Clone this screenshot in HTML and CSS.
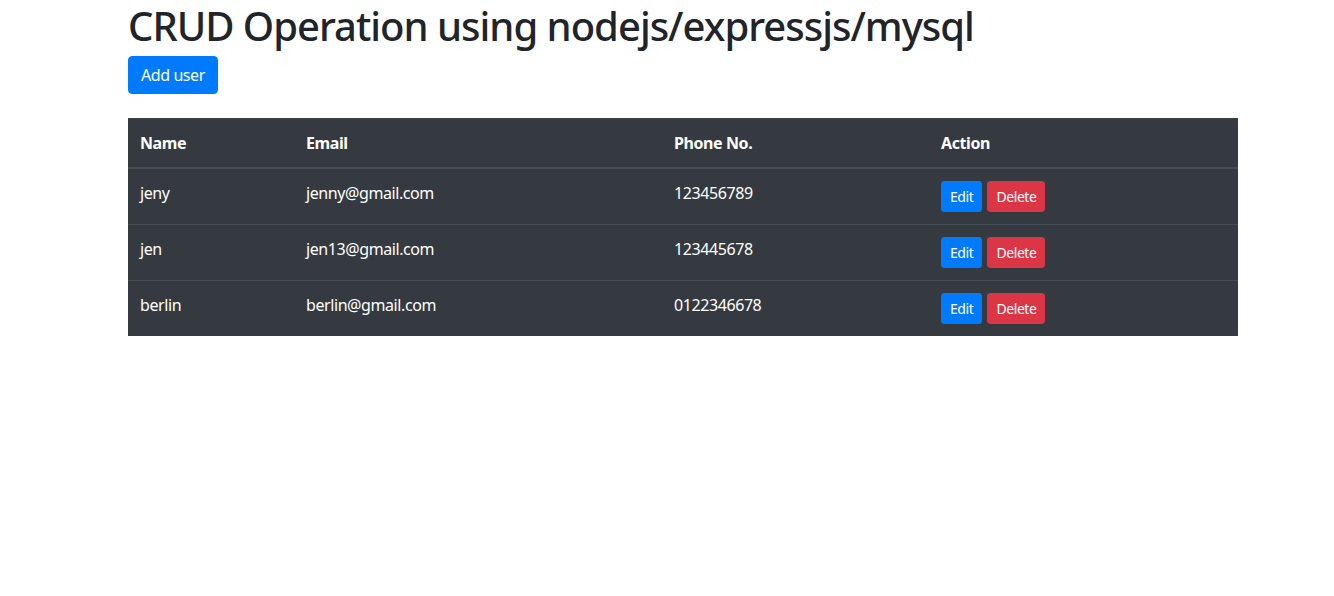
FILE: index.html
```html
<!DOCTYPE html>
<html lang="en">
<head>
<meta charset="utf-8">
<title>CRUD</title>
<link rel="stylesheet" href="styles.css">
</head>
<body>
<div class="container">
  <h1 class="title">CRUD Operation using nodejs/expressjs/mysql</h1>
  <button class="btn btn-primary">Add user</button>
  <table class="table">
    <thead>
      <tr>
        <th class="c-name">Name</th>
        <th class="c-email">Email</th>
        <th class="c-phone">Phone No.</th>
        <th class="c-action">Action</th>
      </tr>
    </thead>
    <tbody>
      <tr>
        <td>jeny</td>
        <td>jenny@gmail.com</td>
        <td>123456789</td>
        <td><div class="actions"><button class="btn btn-sm btn-primary">Edit</button><button class="btn btn-sm btn-danger">Delete</button></div></td>
      </tr>
      <tr>
        <td>jen</td>
        <td>jen13@gmail.com</td>
        <td>123445678</td>
        <td><div class="actions"><button class="btn btn-sm btn-primary">Edit</button><button class="btn btn-sm btn-danger">Delete</button></div></td>
      </tr>
      <tr>
        <td>berlin</td>
        <td>berlin@gmail.com</td>
        <td>0122346678</td>
        <td><div class="actions"><button class="btn btn-sm btn-primary">Edit</button><button class="btn btn-sm btn-danger">Delete</button></div></td>
      </tr>
    </tbody>
  </table>
</div>
</body>
</html>
```
FILE: styles.css
```css
html, body {
  margin: 0;
  padding: 0;
  background: #fff;
}
body {
  font-family: "Noto Sans", "Open Sans", sans-serif;
  font-size: 16px;
  line-height: 1.5;
  color: #212529;
  letter-spacing: -0.026em;
}
.container {
  width: 1110px;
  margin-left: 128px;
}
.title {
  margin: 0 0 6px 0;
  padding-top: 2px;
  font-size: 40px;
  font-weight: 500;
  line-height: 48px;
  letter-spacing: -1px;
}
.btn {
  display: inline-block;
  font-family: inherit;
  letter-spacing: inherit;
  font-size: 16px;
  line-height: 24px;
  padding: 6px 12px;
  border: 1px solid transparent;
  border-radius: 4px;
  color: #fff;
  cursor: pointer;
}
.btn-primary {
  background: #007bff;
  border-color: #007bff;
}
.btn-danger {
  background: #dc3545;
  border-color: #dc3545;
}
.btn-sm {
  font-size: 14px;
  line-height: 21px;
  padding: 4px 8px;
  border-radius: 3px;
}
.table {
  width: 1110px;
  margin-top: 24px;
  border-collapse: collapse;
  background: #343a40;
  color: #fff;
  table-layout: fixed;
}
.table th, .table td {
  padding: 12px;
  text-align: left;
  vertical-align: top;
  border-top: 1px solid #454d55;
}
.table th {
  font-weight: 700;
}
.table thead th {
  border-bottom: 2px solid #454d55;
  border-top: 1px solid #3a4047;
}
.table tbody tr:first-child td {
  border-top: none;
}
.c-name { width: 142px; }
.c-email { width: 344px; }
.c-phone { width: 243px; }
.actions {
  display: flex;
  gap: 5px;
}
```
